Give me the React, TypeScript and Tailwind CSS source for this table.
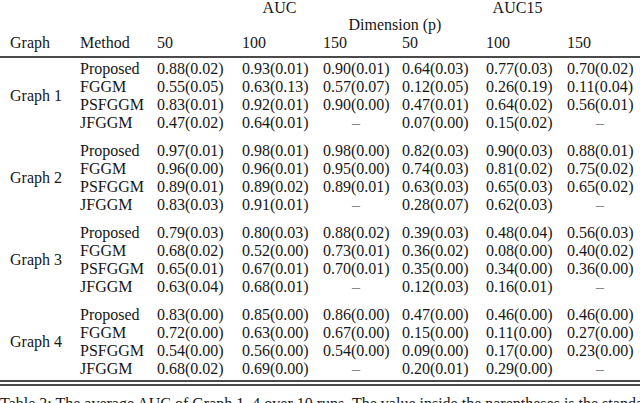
type Group = {
  readonly graph: string
  readonly rows: readonly (readonly string[])[]
}

const methods = ['Proposed', 'FGGM', 'PSFGGM', 'JFGGM']

const groups: readonly Group[] = [
  {
    graph: 'Graph 1',
    rows: [
      ['0.88(0.02)', '0.93(0.01)', '0.90(0.01)', '0.64(0.03)', '0.77(0.03)', '0.70(0.02)'],
      ['0.55(0.05)', '0.63(0.13)', '0.57(0.07)', '0.12(0.05)', '0.26(0.19)', '0.11(0.04)'],
      ['0.83(0.01)', '0.92(0.01)', '0.90(0.00)', '0.47(0.01)', '0.64(0.02)', '0.56(0.01)'],
      ['0.47(0.02)', '0.64(0.01)', '–', '0.07(0.00)', '0.15(0.02)', '–'],
    ],
  },
  {
    graph: 'Graph 2',
    rows: [
      ['0.97(0.01)', '0.98(0.01)', '0.98(0.00)', '0.82(0.03)', '0.90(0.03)', '0.88(0.01)'],
      ['0.96(0.00)', '0.96(0.01)', '0.95(0.00)', '0.74(0.03)', '0.81(0.02)', '0.75(0.02)'],
      ['0.89(0.01)', '0.89(0.02)', '0.89(0.01)', '0.63(0.03)', '0.65(0.03)', '0.65(0.02)'],
      ['0.83(0.03)', '0.91(0.01)', '–', '0.28(0.07)', '0.62(0.03)', '–'],
    ],
  },
  {
    graph: 'Graph 3',
    rows: [
      ['0.79(0.03)', '0.80(0.03)', '0.88(0.02)', '0.39(0.03)', '0.48(0.04)', '0.56(0.03)'],
      ['0.68(0.02)', '0.52(0.00)', '0.73(0.01)', '0.36(0.02)', '0.08(0.00)', '0.40(0.02)'],
      ['0.65(0.01)', '0.67(0.01)', '0.70(0.01)', '0.35(0.00)', '0.34(0.00)', '0.36(0.00)'],
      ['0.63(0.04)', '0.68(0.01)', '–', '0.12(0.03)', '0.16(0.01)', '–'],
    ],
  },
  {
    graph: 'Graph 4',
    rows: [
      ['0.83(0.00)', '0.85(0.00)', '0.86(0.00)', '0.47(0.00)', '0.46(0.00)', '0.46(0.00)'],
      ['0.72(0.00)', '0.63(0.00)', '0.67(0.00)', '0.15(0.00)', '0.11(0.00)', '0.27(0.00)'],
      ['0.54(0.00)', '0.56(0.00)', '0.54(0.00)', '0.09(0.00)', '0.17(0.00)', '0.23(0.00)'],
      ['0.68(0.02)', '0.69(0.00)', '–', '0.20(0.01)', '0.29(0.00)', '–'],
    ],
  },
]

const grid = 'grid grid-cols-[80px_77px_85px_81px_79px_84px_81px_1fr]'

function Cell({ value }: { value: string }) {
  if (value === '–') {
    return <div className="w-[66px] text-center text-[#888]">–</div>
  }
  return <div>{value}</div>
}

export default function App() {
  return (
    <div className="w-[640px] h-[403px] overflow-hidden bg-white font-['Liberation_Serif','DejaVu_Serif',serif] text-[16px] text-[#161616]">
      <div className={`${grid} leading-[16px] h-[16px]`}>
        <div className="col-start-3 col-span-3 text-center">AUC</div>
        <div className="col-start-6 col-span-3 text-center pr-[7px]">AUC15</div>
      </div>
      <div className={`${grid} leading-[17px] h-[17px]`}>
        <div className="col-start-3 col-span-6 text-center pr-[7px]">Dimension (p)</div>
      </div>
      <div className={`${grid} leading-[18px] mt-[1px]`}>
        <div className="pl-[10px]">Graph</div>
        <div>Method</div>
        <div>50</div>
        <div>100</div>
        <div>150</div>
        <div>50</div>
        <div>100</div>
        <div>150</div>
      </div>
      <div className="mt-[4px] h-[2px] bg-[#4a4a4a]" />
      <div className="pt-[2px]">
        {groups.map((group, gi) => (
          <div key={group.graph} className={`${grid} leading-[18px] ${gi > 0 ? 'mt-[10px]' : ''}`}>
            <div className="row-span-4 self-center pl-[10px]">{group.graph}</div>
            {group.rows.map((row, ri) => (
              <div key={ri} className="contents">
                <div>{methods[ri]}</div>
                {row.map((v, ci) => (
                  <Cell key={ci} value={v} />
                ))}
              </div>
            ))}
          </div>
        ))}
      </div>
      <div className="mt-[2px] h-[1.5px] bg-[#4a4a4a]" />
      <div className="mt-[2.5px] h-[1.5px] bg-[#4a4a4a]" />
      <div className="mt-[9px] leading-[18px] whitespace-nowrap">
        Table 3: The average AUC of Graph 1–4 over 10 runs. The value inside the parentheses is the standard error.
      </div>
    </div>
  )
}
